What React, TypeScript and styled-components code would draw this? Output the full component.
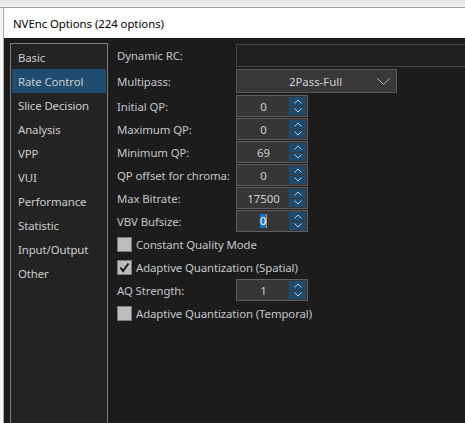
import React from "react";
import styled, { createGlobalStyle } from "styled-components";

const Global = createGlobalStyle`
  html, body { margin: 0; padding: 0; height: 100%; overflow: hidden; }
  body { background: #f0f0f0; font-family: "Noto Sans", "Open Sans", sans-serif; }
  #root { height: 100%; }
`;

const Screen = styled.div`
  display: flex;
  flex-direction: column;
  height: 423px;
  width: 465px;
  overflow: hidden;
`;

const TopStrip = styled.div`
  height: 7px;
  flex: none;
  background: linear-gradient(#e6e6e6, #f2f2f2);
  border-bottom: 1px solid #9a9a9a;
`;

const Main = styled.div`
  display: flex;
  flex: 1;
  min-height: 0;
`;

const BehindStrip = styled.div`
  width: 4px;
  flex: none;
  background: #f7f7f7;
  border-right: 1px solid #a8a8a8;
  box-sizing: border-box;
`;

const Window = styled.div`
  flex: 1;
  display: flex;
  flex-direction: column;
  min-width: 0;
`;

const TitleBar = styled.div`
  height: 30px;
  flex: none;
  background: #ffffff;
  display: flex;
  align-items: center;
  padding-left: 9px;
  font-size: 11.4px;
  letter-spacing: -0.05px;
  color: #000;
`;

const Body = styled.div`
  flex: 1;
  background: #1c1c1c;
  display: flex;
  padding: 5px 0 0 6px;
  min-height: 0;
  gap: 9px;
`;

const List = styled.div`
  width: 98px;
  flex: none;
  box-sizing: border-box;
  border: 1px solid #7d7d84;
  border-bottom: none;
  background: #232323;
  padding-top: 1px;
  display: flex;
  flex-direction: column;
`;

const ListItem = styled.div<{ $selected?: boolean }>`
  height: 24px;
  margin: 0 0 0 1px;
  width: 94px;
  display: flex;
  align-items: center;
  padding-left: 6px;
  box-sizing: border-box;
  font-size: 11.4px;
  letter-spacing: -0.1px;
  color: #cdcdcd;
  background: ${(p) => (p.$selected ? "#1f4d70" : "transparent")};
`;

const Panel = styled.div`
  flex: 1;
  display: flex;
  flex-direction: column;
  padding-top: 1px;
  min-width: 0;
`;

const Row = styled.div<{ $h: number }>`
  height: ${(p) => p.$h}px;
  display: flex;
  align-items: flex-start;
  flex: none;
`;

const Label = styled.div<{ $h: number }>`
  width: 119px;
  height: ${(p) => p.$h}px;
  flex: none;
  display: flex;
  align-items: center;
  font-size: 11.4px;
  letter-spacing: -0.1px;
  color: #c3c6ca;
  white-space: nowrap;
`;

const TextBox = styled.div`
  flex: 1;
  height: 23px;
  box-sizing: border-box;
  border: 1px solid #444;
  background: #202020;
  margin-right: -10px;
`;

const Combo = styled.div`
  width: 161px;
  height: 24px;
  box-sizing: border-box;
  border: 1px solid #5a5a5a;
  background: #383838;
  position: relative;
  display: flex;
  align-items: center;
  justify-content: center;
  font-size: 11.4px;
  color: #d0d0d0;
  padding-right: 2px;
`;

const ComboArrow = styled.svg`
  position: absolute;
  right: 6px;
  top: 8px;
`;

const Spin = styled.div`
  width: 72px;
  height: 22px;
  box-sizing: border-box;
  border: 1px solid #5f5f5f;
  background: #363636;
  display: flex;
`;

const SpinText = styled.div`
  flex: 1;
  display: flex;
  align-items: center;
  justify-content: center;
  font-size: 11.4px;
  color: #cfcfcf;
  padding-left: 1px;
`;

const Selected = styled.span`
  background: #0a74d4;
  color: #ffffff;
  line-height: 14px;
  border-right: 1px solid #f08a30;
`;

const SpinButtons = styled.div`
  width: 17px;
  display: flex;
  flex-direction: column;
  gap: 1px;
  padding: 1px 1px 1px 0;
`;

const SpinBtn = styled.div`
  flex: 1;
  background: #1d4b70;
  display: flex;
  align-items: center;
  justify-content: center;
`;

const CheckRow = styled.div`
  height: 22px;
  display: flex;
  align-items: center;
  gap: 4px;
  font-size: 11.4px;
  letter-spacing: -0.1px;
  color: #c3c6ca;
  white-space: nowrap;
`;

const Box = styled.div`
  width: 15px;
  height: 15px;
  box-sizing: border-box;
  border: 1px solid #7a7a7a;
  background: #bdbdbd;
  display: flex;
  align-items: center;
  justify-content: center;
  flex: none;
`;

const Chevron = ({ up }: { up?: boolean }) => (
  <svg width="8" height="5" viewBox="0 0 8 5">
    <polyline
      points={up ? "0.5,4.5 4,1 7.5,4.5" : "0.5,0.5 4,4 7.5,0.5"}
      fill="none"
      stroke="#c8ccd0"
      strokeWidth="1"
    />
  </svg>
);

const SpinBox = ({ value, selected }: { value: string; selected?: boolean }) => (
  <Spin>
    <SpinText>{selected ? <Selected>{value}</Selected> : value}</SpinText>
    <SpinButtons>
      <SpinBtn>
        <Chevron up />
      </SpinBtn>
      <SpinBtn>
        <Chevron />
      </SpinBtn>
    </SpinButtons>
  </Spin>
);

const Check = ({ checked, label }: { checked?: boolean; label: string }) => (
  <CheckRow>
    <Box>
      {checked && (
        <svg width="11" height="11" viewBox="0 0 11 11">
          <polyline points="1.5,5.5 4,9 9.5,1.5" fill="none" stroke="#1a1a1a" strokeWidth="2" />
        </svg>
      )}
    </Box>
    {label}
  </CheckRow>
);

const items = [
  "Basic",
  "Rate Control",
  "Slice Decision",
  "Analysis",
  "VPP",
  "VUI",
  "Performance",
  "Statistic",
  "Input/Output",
  "Other",
];

const spins: [string, string, boolean?][] = [
  ["Initial QP:", "0"],
  ["Maximum QP:", "0"],
  ["Minimum QP:", "69"],
  ["QP offset for chroma:", "0"],
  ["Max Bitrate:", "17500"],
  ["VBV Bufsize:", "0", true],
];

export default function App() {
  return (
    <>
      <Global />
      <Screen>
        <TopStrip />
        <Main>
          <BehindStrip />
          <Window>
            <TitleBar>NVEnc Options (224 options)</TitleBar>
            <Body>
              <List>
                {items.map((it) => (
                  <ListItem key={it} $selected={it === "Rate Control"}>
                    {it}
                  </ListItem>
                ))}
              </List>
              <Panel>
                <Row $h={25}>
                  <Label $h={23}>Dynamic RC:</Label>
                  <TextBox />
                </Row>
                <Row $h={26}>
                  <Label $h={24}>Multipass:</Label>
                  <Combo>
                    2Pass-Full
                    <ComboArrow width="13" height="8" viewBox="0 0 13 8">
                      <polyline points="0.5,0.5 6.5,6.5 12.5,0.5" fill="none" stroke="#b8b8b8" strokeWidth="1" />
                    </ComboArrow>
                  </Combo>
                </Row>
                {spins.map(([l, v, s]) => (
                  <Row $h={23} key={l}>
                    <Label $h={22}>{l}</Label>
                    <SpinBox value={v} selected={s} />
                  </Row>
                ))}
                <Row $h={23}>
                  <Check label="Constant Quality Mode" />
                </Row>
                <Row $h={23}>
                  <Check checked label="Adaptive Quantization (Spatial)" />
                </Row>
                <Row $h={23}>
                  <Label $h={22}>AQ Strength:</Label>
                  <SpinBox value="1" />
                </Row>
                <Row $h={23}>
                  <Check label="Adaptive Quantization (Temporal)" />
                </Row>
              </Panel>
            </Body>
          </Window>
        </Main>
      </Screen>
    </>
  );
}
